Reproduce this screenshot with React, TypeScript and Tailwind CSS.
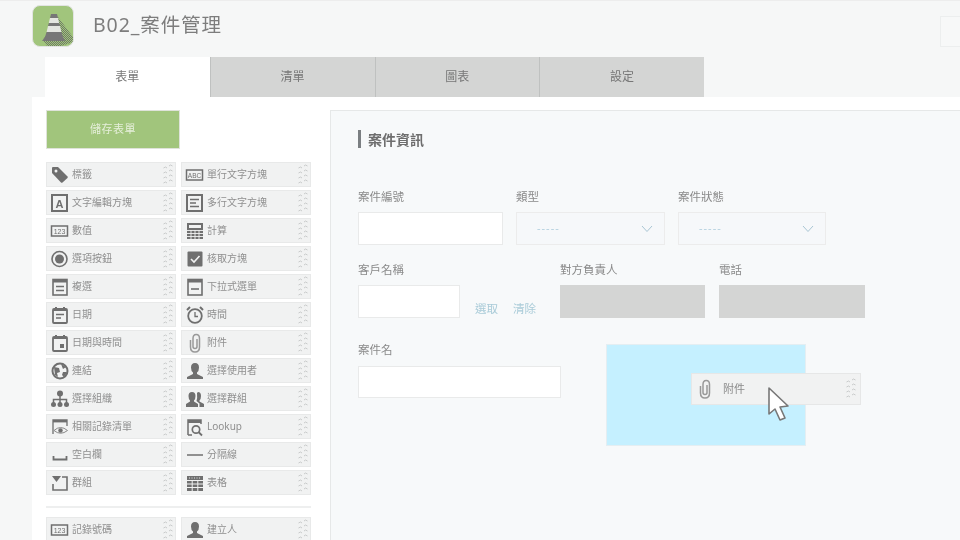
import React from "react";

const G = "#6f6f6f";

function Icon({ name }: { name: string }) {
  const common = { width: 20, height: 20, viewBox: "0 0 20 20", fill: "none" } as const;
  switch (name) {
    case "tag":
      return (
        <svg {...common}>
          <path d="M2 5 V3 Q2 2 3 2 H8 L17.5 11.5 Q18 12.5 17.5 13 L12.5 17.5 Q11.5 18 11 17.5 L2 8 Z" fill={G} />
          <circle cx="6" cy="6" r="1.5" fill="#f1f2f2" />
        </svg>
      );
    case "abc":
      return (
        <svg {...common}>
          <rect x="1.5" y="5" width="16" height="10" stroke={G} strokeWidth="1.5" />
          <text x="9.5" y="12.6" fontSize="6.5" textAnchor="middle" fill={G} fontFamily="Liberation Sans">ABC</text>
        </svg>
      );
    case "a":
      return (
        <svg {...common}>
          <rect x="2" y="2" width="15" height="16" stroke={G} strokeWidth="2" />
          <text x="9.5" y="14.5" fontSize="11" fontWeight="700" textAnchor="middle" fill={G} fontFamily="Liberation Sans">A</text>
        </svg>
      );
    case "lines":
      return (
        <svg {...common}>
          <rect x="2" y="2" width="15" height="16" stroke={G} strokeWidth="2" />
          <path d="M5 6.5 H14 M5 10 H11 M5 13.5 H14" stroke={G} strokeWidth="1.4" />
        </svg>
      );
    case "123":
      return (
        <svg {...common}>
          <rect x="1.5" y="5" width="16" height="10" stroke={G} strokeWidth="1.5" />
          <text x="9.5" y="12.6" fontSize="7" textAnchor="middle" fill={G} fontFamily="Liberation Sans">123</text>
        </svg>
      );
    case "calc":
      return (
        <svg {...common}>
          <rect x="2" y="2" width="16" height="16" fill={G} />
          <rect x="4" y="4" width="12" height="3" fill="#f1f2f2" />
          <path d="M2 9.5 H18 M2 12.5 H18 M2 15.5 H18 M6 9 V18 M10 9 V18 M14 9 V18" stroke="#f1f2f2" strokeWidth="0.9" />
        </svg>
      );
    case "radio":
      return (
        <svg {...common}>
          <circle cx="9.5" cy="10" r="7.5" stroke={G} strokeWidth="1.6" />
          <circle cx="9.5" cy="10" r="4.5" fill={G} />
        </svg>
      );
    case "check":
      return (
        <svg {...common}>
          <rect x="2.5" y="2.5" width="15" height="15" rx="1" fill={G} />
          <path d="M6 10 L9 13 L14.5 7" stroke="#f1f2f2" strokeWidth="1.6" />
        </svg>
      );
    case "list":
      return (
        <svg {...common}>
          <rect x="3" y="2.5" width="14" height="15.5" stroke={G} strokeWidth="1.6" />
          <rect x="3" y="2.5" width="14" height="3" fill={G} />
          <path d="M6 9.5 H14 M6 13.5 H14" stroke={G} strokeWidth="1.4" />
        </svg>
      );
    case "drop":
      return (
        <svg {...common}>
          <rect x="3" y="2.5" width="14" height="15.5" stroke={G} strokeWidth="1.6" />
          <rect x="3" y="2.5" width="14" height="3" fill={G} />
          <path d="M6 12 H14" stroke={G} strokeWidth="1.6" />
        </svg>
      );
    case "date":
      return (
        <svg {...common}>
          <rect x="3" y="4" width="14" height="14" rx="1" stroke={G} strokeWidth="1.8" />
          <path d="M3 5 H17 M6 2 V5 M14 2 V5" stroke={G} strokeWidth="2" />
          <path d="M6 9.5 H14 M6 13 H11" stroke={G} strokeWidth="1.4" />
        </svg>
      );
    case "clock":
      return (
        <svg {...common}>
          <circle cx="10" cy="11" r="6.8" stroke={G} strokeWidth="1.8" />
          <path d="M10 7 V11.5 H13" stroke={G} strokeWidth="1.3" />
          <path d="M2 5 L5 2 M18 5 L15 2" stroke={G} strokeWidth="2" />
        </svg>
      );
    case "datetime":
      return (
        <svg {...common}>
          <rect x="3" y="4" width="14" height="14" rx="1" stroke={G} strokeWidth="1.8" />
          <path d="M3 5 H17 M6 2 V5 M14 2 V5" stroke={G} strokeWidth="2" />
          <rect x="10" y="11" width="4" height="4" fill={G} />
        </svg>
      );
    case "clip":
      return (
        <svg {...common}>
          <path d="M5.5 7 V14 Q5.5 19 10 19 Q14.5 19 14.5 14 V5.5 Q14.5 1.5 11.2 1.5 Q8 1.5 8 5.5 V13.5 Q8 15.5 10 15.5 Q12 15.5 12 13.5 V6" stroke="#999" strokeWidth="1.5" />
        </svg>
      );
    case "globe":
      return (
        <svg {...common}>
          <circle cx="10" cy="10" r="7.5" stroke={G} strokeWidth="2" />
          <path d="M4 6 L9 7 L10 11 L7 12 L8 16 L5 14 Z M11 3 L16 6 L13 8 Z M13 11 L17 11 L14 16 L12 14 Z" fill={G} />
        </svg>
      );
    case "user":
      return (
        <svg {...common}>
          <path d="M10 2 Q14 2 14 6.5 Q14 10 12 11.5 V13 L18 16 V18 H2 V16 L8 13 V11.5 Q6 10 6 6.5 Q6 2 10 2 Z" fill={G} />
        </svg>
      );
    case "org":
      return (
        <svg {...common}>
          <circle cx="10" cy="4.5" r="3" fill={G} />
          <circle cx="3.5" cy="15.5" r="2.5" fill={G} />
          <circle cx="10" cy="15.5" r="2.5" fill={G} />
          <circle cx="16.5" cy="15.5" r="2.5" fill={G} />
          <path d="M10 7 V15 M3.5 14 V10.5 H16.5 V14" stroke={G} strokeWidth="1.5" />
        </svg>
      );
    case "group":
      return (
        <svg {...common}>
          <path d="M7 3 Q10.5 3 10.5 7 Q10.5 10 9 11.5 V12.5 L13 15 V18 H1 V15 L5 12.5 V11.5 Q3.5 10 3.5 7 Q3.5 3 7 3 Z" fill={G} />
          <path d="M13 3 Q16 3 16 7 Q16 10 14.5 11.5 V12.5 L19 15 V18 H14.5 V14.5 L11.5 12 Q12.5 9 12 4 Z" fill={G} />
        </svg>
      );
    case "related":
      return (
        <svg {...common}>
          <path d="M3 17 V3 H17 V9" stroke={G} strokeWidth="1.3" />
          <rect x="3" y="3" width="14" height="2.4" fill={G} />
          <path d="M4 13.5 Q10.5 7.5 17.5 13.5 Q10.5 19 4 13.5 Z" fill="#f1f2f2" stroke="#8a8a8a" strokeWidth="1" />
          <circle cx="10.5" cy="13.5" r="2.2" fill={G} />
        </svg>
      );
    case "lookup":
      return (
        <svg {...common}>
          <path d="M3 18 V3 H16 V7 M3 18 H7" stroke={G} strokeWidth="1.5" />
          <rect x="3" y="3" width="13" height="3" fill={G} />
          <circle cx="11" cy="12.5" r="3.7" stroke={G} strokeWidth="1.7" />
          <path d="M13.5 15 L17 18.5" stroke={G} strokeWidth="1.8" />
        </svg>
      );
    case "space":
      return (
        <svg {...common}>
          <path d="M3.5 11 V14.5 H16.5 V11" stroke={G} strokeWidth="1.8" />
        </svg>
      );
    case "hr":
      return (
        <svg {...common}>
          <path d="M2 10 H18" stroke={G} strokeWidth="1.5" />
        </svg>
      );
    case "fold":
      return (
        <svg {...common}>
          <path d="M12 4 H17 V17 H3 V11" stroke={G} strokeWidth="1.6" />
          <path d="M2 3 H11 L6.5 9 Z" fill={G} />
        </svg>
      );
    case "table":
      return (
        <svg {...common}>
          <rect x="2" y="3" width="16" height="15" fill={G} />
          <path d="M2 7.5 H18 M2 11 H18 M2 14.5 H18 M7.2 7 V18 M12.8 7 V18" stroke="#f1f2f2" strokeWidth="1" />
          <path d="M4 5 H16" stroke="#f1f2f2" strokeWidth="0.9" strokeDasharray="1 1.5" />
        </svg>
      );
    default:
      return null;
  }
}

function Grip() {
  const chev = [3, 8, 13, 18];
  return (
    <svg width="10" height="22" viewBox="0 0 10 22" fill="none">
      {chev.map((y) => (
        <g key={y} stroke="#c4c6c6" strokeWidth="0.9">
          <path d={`M0.5 ${y + 1} L2.5 ${y} L4 ${y + 1}`} />
          <path d={`M6 ${y - 1} L7.5 ${y - 2} L9.5 ${y - 1}`} />
        </g>
      ))}
    </svg>
  );
}

function Tile({ icon, label }: { icon: string; label: string }) {
  return (
    <div className="flex h-[25px] w-[130px] items-center border border-[#e8e9e9] bg-[#f1f2f2] pl-[2px] pr-[2px]">
      <div className="flex w-[21px] shrink-0 items-center justify-center">
        <Icon name={icon} />
      </div>
      <span className="ml-[2px] flex-1 whitespace-nowrap text-[10px] text-[#8f8f8f]">{label}</span>
      <Grip />
    </div>
  );
}

const tiles: [string, string][] = [
  ["tag", "標籤"], ["abc", "單行文字方塊"],
  ["a", "文字編輯方塊"], ["lines", "多行文字方塊"],
  ["123", "數值"], ["calc", "計算"],
  ["radio", "選項按鈕"], ["check", "核取方塊"],
  ["list", "複選"], ["drop", "下拉式選單"],
  ["date", "日期"], ["clock", "時間"],
  ["datetime", "日期與時間"], ["clip", "附件"],
  ["globe", "連結"], ["user", "選擇使用者"],
  ["org", "選擇組織"], ["group", "選擇群組"],
  ["related", "相關記錄清單"], ["lookup", "Lookup"],
  ["space", "空白欄"], ["hr", "分隔線"],
  ["fold", "群組"], ["table", "表格"],
];

function Label({ children }: { children: React.ReactNode }) {
  return <div className="h-[15px] text-[11.5px] leading-[15px] text-[#8a8a8a]">{children}</div>;
}

function Select({ w }: { w: string }) {
  return (
    <div className={`flex h-[33px] items-center justify-between border border-[#ececec] bg-[#f6f8fa] pl-[20px] pr-[11px] ${w}`}>
      <span className="text-[11px] tracking-[1px] text-[#b4d0de]">-----</span>
      <svg width="12" height="8" viewBox="0 0 12 8" fill="none">
        <path d="M1 1 L6 6.5 L11 1" stroke="#a9c6d4" strokeWidth="1" />
      </svg>
    </div>
  );
}

export default function App() {
  return (
    <div
      className="flex h-[540px] w-[960px] flex-col overflow-hidden bg-[#f6f7f7] blur-[0.4px]"
      style={{ fontFamily: '"Noto Sans", "Noto Sans CJK TC", sans-serif' }}
    >
      <header className="flex h-[57px] shrink-0 items-start border-t border-[#ededed] pl-[32px] pt-[4px]">
        <div className="relative h-[42px] w-[42px] overflow-hidden rounded-[8px] border border-[#e2e4e2] bg-[#a1c57c]">
          <svg width="42" height="42" viewBox="0 0 42 42" fill="none">
            <defs>
              <pattern id="dots" width="2" height="2" patternUnits="userSpaceOnUse">
                <rect width="1" height="1" fill="#6f7a66" />
                <rect x="1" y="1" width="1" height="1" fill="#6f7a66" />
              </pattern>
            </defs>
            <path d="M25 11 L40 31 L40 36 L28 40 L14 40 L10 34 Z" fill="url(#dots)" />
            <path d="M18 8 H24 L25 12 H17 Z" fill="#777" />
            <path d="M17 12 H25 L26.2 17 H15.8 Z" fill="#e4e6e1" />
            <path d="M15.8 17 H26.2 L27 20 H15 Z" fill="#777" />
            <path d="M15 20 H27 L28.4 26 H13.6 Z" fill="#e4e6e1" />
            <path d="M13.6 26 H28.4 L30 31 L32 35 H9 L12 31 Z" fill="#777" />
          </svg>
        </div>
        <h1 className="ml-[19px] mt-[6px] text-[19.5px] leading-[28px] tracking-[0.9px] text-[#7d7d7d]">B02_案件管理</h1>
        <div className="ml-auto mt-[11px] h-[31px] w-[20px] border border-r-0 border-[#eceeee] bg-[#f7f8f8]" />
      </header>

      <nav className="ml-[45px] flex h-[40px] w-[659px] shrink-0">
        <div className="flex w-[165px] items-center justify-center bg-white text-[12px] text-[#777777]">表單</div>
        {["清單", "圖表", "設定"].map((t) => (
          <div key={t} className="flex w-[165px] items-center justify-center border-l border-[#bfc1c0] bg-[#d4d5d4] text-[12px] text-[#777777]">
            {t}
          </div>
        ))}
      </nav>

      <main className="ml-[32px] flex min-h-0 flex-1 bg-white">
        <aside className="w-[298px] shrink-0 pl-[14px] pt-[13px]">
          <div className="flex h-[39px] w-[134px] items-center justify-center border border-[#dfe3da] bg-[#a1c57c] text-[11px] tracking-[0.5px] text-[#e6efdb]">
            儲存表單
          </div>
          <div className="mt-[13px] grid w-[265px] grid-cols-[130px_130px] gap-x-[5px] gap-y-[3px]">
            {tiles.map(([i, l]) => (
              <Tile key={l} icon={i} label={l} />
            ))}
          </div>
          <div className="mt-[11px] h-[2px] w-[265px] bg-[#eeefef]" />
          <div className="mt-[9px] grid w-[265px] grid-cols-[130px_130px] gap-x-[5px]">
            <Tile icon="123" label="記錄號碼" />
            <Tile icon="user" label="建立人" />
          </div>
        </aside>

        <section className="mt-[13px] flex-1 border-l border-t border-[#e6e8e8] bg-[#f7f9fa] pl-[27px]">
          <div className="mt-[19px] flex h-[18px] items-center border-l-[3px] border-[#7b7f82] pl-[7px] text-[14px] font-bold text-[#6e6e6e]">
            案件資訊
          </div>

          <div className="mt-[41px] flex">
            <div className="w-[158px]">
              <Label>案件編號</Label>
              <div className="mt-[8px] h-[33px] w-[145px] border border-[#e9eaea] bg-white" />
            </div>
            <div className="w-[162px]">
              <Label>類型</Label>
              <div className="mt-[8px]"><Select w="w-[149px]" /></div>
            </div>
            <div>
              <Label>案件狀態</Label>
              <div className="mt-[8px]"><Select w="w-[148px]" /></div>
            </div>
          </div>

          <div className="mt-[17px] flex">
            <div className="w-[202px]">
              <Label>客戶名稱</Label>
              <div className="mt-[8px] flex items-end">
                <div className="h-[33px] w-[102px] border border-[#e9eaea] bg-white" />
                <span className="ml-[15px] text-[11.5px] leading-[18px] text-[#a9cbd8]">選取</span>
                <span className="ml-[15px] text-[11.5px] leading-[18px] text-[#a9cbd8]">清除</span>
              </div>
            </div>
            <div className="w-[159px]">
              <Label>對方負責人</Label>
              <div className="mt-[8px] h-[33px] w-[145px] bg-[#d4d5d4]" />
            </div>
            <div>
              <Label>電話</Label>
              <div className="mt-[8px] h-[33px] w-[146px] bg-[#d4d5d4]" />
            </div>
          </div>

          <div className="mt-[24px] flex">
            <div className="w-[248px]">
              <Label>案件名</Label>
              <div className="mt-[9px] h-[32px] w-[203px] border border-[#e9eaea] bg-white" />
            </div>
            <div className="relative mt-[2px] h-[102px] w-[200px] border border-[#e4eef2] bg-[#c5f0ff]">
              <div className="absolute left-[84px] top-[28px] flex h-[32px] w-[170px] items-center border border-[#e6e7e7] bg-[#f1f2f2] pl-[3px] pr-[4px]">
                <Icon name="clip" />
                <span className="ml-[8px] flex-1 text-[11px] text-[#8b8b8b]">附件</span>
                <Grip />
              </div>
              <svg className="absolute left-[160px] top-[41px]" width="24" height="38" viewBox="0 0 24 38" fill="none">
                <path d="M2 2 V28 L8 23 L13 34 L18 32 L13 21 L21 20 Z" fill="#fff" stroke="#777" strokeWidth="1.6" strokeLinejoin="round" />
              </svg>
            </div>
          </div>
        </section>
      </main>
    </div>
  );
}
